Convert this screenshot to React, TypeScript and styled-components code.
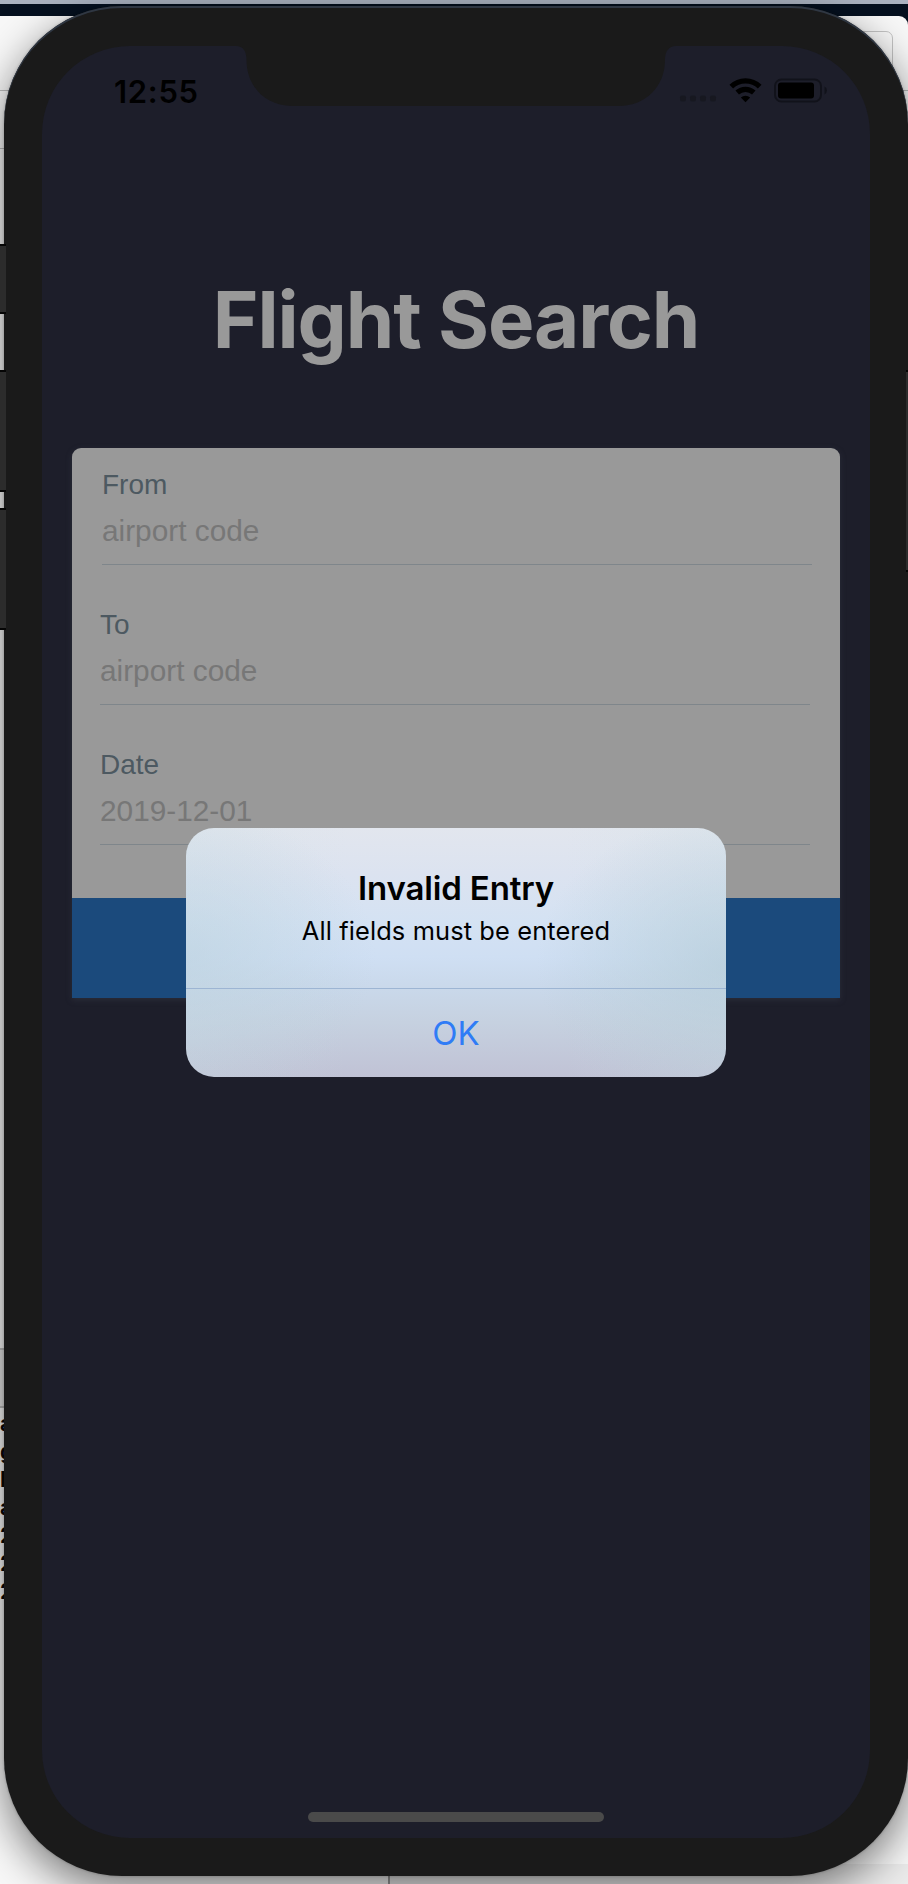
import React from "react";
import styled, { createGlobalStyle } from "styled-components";

const GlobalStyle = createGlobalStyle`
  * { box-sizing: border-box; }
  body { margin: 0; overflow: hidden; }
`;

const ui = `Inter, "Liberation Sans", sans-serif`;
const helv = `"Liberation Sans", Arial, sans-serif`;

/* Desktop: every window shares one grid cell and is stacked in order */
const Desktop = styled.div`
  display: grid;
  width: 908px;
  height: 1884px;
  overflow: hidden;
  background: linear-gradient(#aab2c0 0 4px, #05101f 4px 100%);
  > * {
    grid-area: 1 / 1;
  }
`;

const BackWindow = styled.div`
  display: flex;
  flex-direction: column;
  justify-content: space-between;
  margin-top: 16px;
  background: #f8f8f8;
  border-top-right-radius: 9px;
`;

const Toolbar = styled.div`
  display: flex;
  justify-content: flex-end;
  height: 75px;
  padding: 15px 15px 0;
  border-bottom: 1px solid #bcbcbc;
`;

const SearchOutline = styled.div`
  width: 120px;
  height: 50px;
  border: 1px solid #c4c4c4;
  border-radius: 7px;
`;

const TabRow = styled.div`
  height: 58px;
  border-bottom: 1px solid #bcbcbc;
`;

const Editor = styled.div`
  flex: 1;
  padding-top: 1199px;
`;

const SectionBar = styled.div`
  height: 60px;
  border: solid #bcbcbc;
  border-width: 2px 0;
  background: #e4e4e4;
`;

const Gutter = styled.div`
  display: flex;
  flex-direction: column;
  width: 20px;
  padding-top: 2px;
  font: 700 21px/28px ${ui};
  color: #0a0a0a;
`;

const FooterPane = styled.div`
  height: 20px;
  margin-left: 388px;
  border-left: 2px solid #9a9a9a;
  background: #ececec;
`;

const Phone = styled.div`
  width: 904px;
  height: 1870px;
  margin: 6px 0 0 4px;
  padding: 40px 38px 38px;
  border-radius: 118px;
  background: #1a1a1a;
  box-shadow: 0 14px 44px rgba(0, 0, 0, 0.52), 0 0 3px rgba(0, 0, 0, 0.25), inset 0 2px 0 #2f3743;
`;

const ButtonRail = styled.div<{ $top: number; $right?: boolean }>`
  display: flex;
  flex-direction: column;
  justify-self: ${(p) => (p.$right ? "end" : "start")};
  width: ${(p) => (p.$right ? 2 : 6)}px;
  padding-top: ${(p) => p.$top}px;
`;

const SideButton = styled.div<{ $h: number; $gap?: number }>`
  height: ${(p) => p.$h}px;
  margin-bottom: ${(p) => p.$gap ?? 0}px;
  background: #2c2c2c;
  border: solid #050505;
  border-width: 2px 0;
`;

const Screen = styled.main`
  position: relative;
  display: flex;
  flex-direction: column;
  width: 828px;
  height: 1792px;
  border-radius: 88px;
  overflow: hidden;
  background: #1d1e2a;
`;

const StatusBar = styled.div`
  display: flex;
  align-items: flex-start;
  justify-content: space-between;
  height: 88px;
  padding: 0 43px 0 72px;
`;

const Time = styled.span`
  width: 132px;
  padding-top: 26px;
  font: 600 31px/40px ${ui};
  letter-spacing: 0.7px;
  color: #000;
`;

const StatusIconsSvg = styled.svg`
  margin-top: 30px;
  transform: translateY(-0.5px);
`;

const Title = styled.h1`
  margin: 138px 0 0;
  text-align: center;
  font: 700 78px/96px ${ui};
  letter-spacing: -1.1px;
  color: #999;
  white-space: nowrap;
`;

const Card = styled.div`
  width: 768px;
  height: 550px;
  margin: 80px 0 0 30px;
  display: flex;
  flex-direction: column;
  border-radius: 9px 9px 0 0;
  background: #999;
  box-shadow: 0 2px 6px rgba(70, 75, 85, 0.35);
  overflow: hidden;
`;

const Fields = styled.div`
  flex: 1;
  display: flex;
  flex-direction: column;
  gap: 23px;
`;

const Field = styled.div<{ $inset: number }>`
  display: flex;
  flex-direction: column;
  gap: 12px;
  width: 710px;
  height: 117px;
  margin-left: ${(p) => p.$inset}px;
  padding-top: 21px;
  border-bottom: 1px solid #7f868b;
`;

const Label = styled.div`
  font: 400 28px/32px ${helv};
  color: #4d5961;
`;

const Placeholder = styled.div`
  font: 400 29.8px/36px ${helv};
  color: #777;
`;

const SearchButton = styled.div`
  height: 100px;
  background: #1b4a7c;
`;

const HomeIndicator = styled.div`
  width: 296px;
  height: 10px;
  margin: auto auto 16px 266px;
  border-radius: 5px;
  background: #4a4a4a;
`;

const Alert = styled.div`
  position: absolute;
  left: 144px;
  top: 782px;
  width: 540px;
  height: 248.5px;
  border-radius: 28px;
  overflow: hidden;
  text-align: center;
  font-family: ${ui};
  color: #000;
  background:
    radial-gradient(ellipse 190px 150px at 0 52%, rgba(186, 208, 222, 0.55), rgba(186, 208, 222, 0)),
    radial-gradient(ellipse 190px 150px at 100% 55%, rgba(180, 203, 216, 0.65), rgba(180, 203, 216, 0)),
    linear-gradient(90deg, rgba(205, 224, 228, 0.25), rgba(210, 225, 240, 0) 30% 70%, rgba(205, 224, 228, 0.25)),
    linear-gradient(#e2e6ee, #dce3f0 18%, #d4e2f3 38%, #cfdff3 52%, #c9d8ea 65%, #c6d1e0 78%, #c0c2d5);
`;

const AlertTitle = styled.div`
  padding-top: 40px;
  font-size: 33px;
  font-weight: 600;
  line-height: 40px;
  letter-spacing: -0.15px;
`;

const AlertText = styled.div`
  margin-top: 7px;
  font-size: 25.4px;
  line-height: 32px;
  letter-spacing: 0.12px;
`;

const AlertAction = styled.div`
  margin-top: 41px;
  height: 88px;
  border-top: 1px solid #9db5d3;
  font-size: 33px;
  line-height: 88px;
  color: #2f7cf6;
`;

/* The notch hangs over the screen's top edge */
const Notch = styled.svg`
  position: absolute;
  left: 190px;
  top: 0;
`;

const fields = [
  { label: "From", value: "airport code", inset: 30 },
  { label: "To", value: "airport code", inset: 28 },
  { label: "Date", value: "2019-12-01", inset: 28 },
];

const gutterText = ["a", "g", "D", "a", "2", "2", "2"];

function StatusIcons() {
  return (
    <StatusIconsSvg width="150" height="28" viewBox="0 0 150 28">
      {[0, 10, 20, 30].map((x) => (
        <rect key={x} x={3 + x} y="20" width="6" height="6" rx="2" fill="#171820" />
      ))}
      <g fill="none" stroke="#000" strokeWidth="5.2">
        <path d="M54.300 11.200a20.200 20.200 0 0 1 28.400 0" />
        <path d="M60.200 17a12.300 12.300 0 0 1 16.600 0" />
      </g>
      <path d="M68.500 26.800l-4.700-4.700a7.200 7.200 0 0 1 9.400 0z" fill="#000" />
      <rect x="98" y="4" width="46" height="22" rx="6.5" fill="none" stroke="#11121a" strokeWidth="2" />
      <rect x="101" y="7" width="36" height="16" rx="3" fill="#000" />
      <path d="M147.500 11v8q2.400-1.200 2.400-4t-2.400-4z" fill="#11121a" />
    </StatusIconsSvg>
  );
}

export default function App() {
  return (
    <>
      <GlobalStyle />
      <Desktop>
        <BackWindow>
          <Toolbar>
            <SearchOutline />
          </Toolbar>
          <TabRow />
          <Editor>
            <SectionBar />
            <Gutter>
              {gutterText.map((t, i) => (
                <span key={i}>{t}</span>
              ))}
            </Gutter>
          </Editor>
          <FooterPane />
        </BackWindow>
        <Phone>
          <Screen>
            <StatusBar>
              <Time>12:55</Time>
              <StatusIcons />
            </StatusBar>
            <Title>Flight Search</Title>
            <Card>
              <Fields>
                {fields.map((f) => (
                  <Field key={f.label} $inset={f.inset}>
                    <Label>{f.label}</Label>
                    <Placeholder>{f.value}</Placeholder>
                  </Field>
                ))}
              </Fields>
              <SearchButton />
            </Card>
            <HomeIndicator />
            <Notch width="448" height="60" viewBox="0 0 448 60">
              <path d="M3 0H4C11 0 14.500 5 14.500 14C14.500 40 33 60 60 60H387C414 60 433 40 433 14C433 5 437 0 444 0Z" fill="#1a1a1a" />
            </Notch>
            <Alert role="alertdialog">
              <AlertTitle>Invalid Entry</AlertTitle>
              <AlertText>All fields must be entered</AlertText>
              <AlertAction>OK</AlertAction>
            </Alert>
          </Screen>
        </Phone>
        <ButtonRail $top={244}>
          <SideButton $h={70} $gap={56} />
          <SideButton $h={122} $gap={16} />
          <SideButton $h={122} />
        </ButtonRail>
        <ButtonRail $top={370} $right>
          <SideButton $h={202} />
        </ButtonRail>
      </Desktop>
    </>
  );
}
